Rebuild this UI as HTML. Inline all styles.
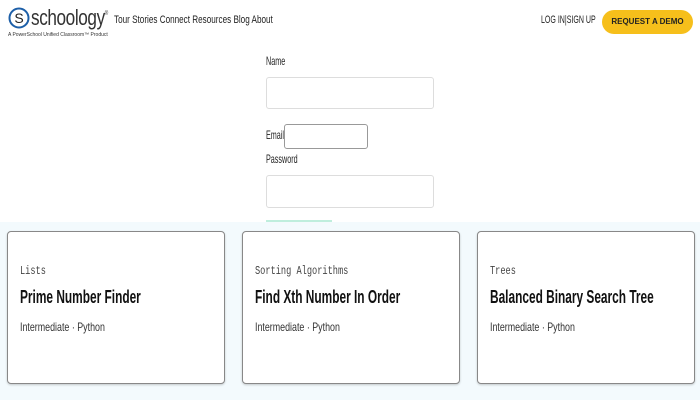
<!DOCTYPE html>
<html><head><style>
*{margin:0;padding:0;box-sizing:border-box}
body{width:700px;height:400px;overflow:hidden;background:#fff;font-family:"Liberation Sans",sans-serif;position:relative;color:#222}
.a{position:absolute;white-space:nowrap}
.inp{position:absolute;border:1px solid #ddd;border-radius:3px;background:#fff}
.bottom{position:absolute;left:0;top:222px;width:700px;height:178px;background:#f3fafd}
.card{position:absolute;top:231px;width:218px;height:153px;background:#fff;border:1px solid #888;border-radius:4px;box-shadow:0 1px 2px rgba(0,0,0,.2)}
.card .l{position:absolute;left:12px;top:32px;font-family:"Liberation Mono",monospace;font-size:12px;color:#444;transform:scaleX(.72);transform-origin:0 0;white-space:nowrap}
.card .t{position:absolute;left:12px;top:55px;font-size:18px;font-weight:bold;color:#111;transform:scaleX(.66);transform-origin:0 0;white-space:nowrap}
.card .s{position:absolute;left:12px;top:88px;font-size:12px;color:#333;transform:scaleX(.74);transform-origin:0 0;white-space:nowrap}
.lab{font-size:12px;transform:scaleX(.6);transform-origin:0 0}
</style></head><body>
<svg class="a" style="left:8px;top:7px" width="22" height="22"><circle cx="11" cy="11" r="9.5" fill="none" stroke="#1d5fa8" stroke-width="2"/><text x="11" y="16" text-anchor="middle" font-family="Liberation Sans" font-size="14" fill="#222">S</text></svg>
<div class="a" style="left:31px;top:5px;font-size:22px;color:#333;transform:scaleX(.78);transform-origin:0 0;letter-spacing:-.5px">schoology<span style="font-size:6px;position:relative;top:-10px">®</span></div>
<div class="a" style="left:8px;top:32px;font-size:5px;color:#333">A PowerSchool Unified Classroom™ Product</div>
<div class="a" style="left:114px;top:14px;font-size:11px;color:#222;transform:scaleX(.74);transform-origin:0 0">Tour Stories Connect Resources Blog About</div>
<div class="a" style="left:541px;top:14px;font-size:11px;color:#222;transform:scaleX(.64);transform-origin:0 0">LOG IN|SIGN UP</div>
<div class="a" style="left:602px;top:10px;width:91px;height:24px;background:#f6bf1b;border-radius:12px;font-size:8px;font-weight:bold;color:#222;text-align:center;line-height:24px">REQUEST A DEMO</div>

<div class="a lab" style="left:266px;top:54px">Name</div>
<div class="inp" style="left:266px;top:77px;width:168px;height:32px"></div>
<div class="a lab" style="left:266px;top:128px">Email</div>
<div class="inp" style="left:284px;top:124px;width:84px;height:25px;border-color:#999"></div>
<div class="a lab" style="left:266px;top:152px">Password</div>
<div class="inp" style="left:266px;top:175px;width:168px;height:33px"></div>

<div class="bottom"></div>
<div class="a" style="left:266px;top:220px;width:66px;height:2px;background:#bfeedd"></div>
<div class="card" style="left:7px"><div class="l">Lists</div><div class="t">Prime Number Finder</div><div class="s">Intermediate · Python</div></div>
<div class="card" style="left:242px"><div class="l">Sorting Algorithms</div><div class="t">Find Xth Number In Order</div><div class="s">Intermediate · Python</div></div>
<div class="card" style="left:477px"><div class="l">Trees</div><div class="t">Balanced Binary Search Tree</div><div class="s">Intermediate · Python</div></div>
</body></html>
